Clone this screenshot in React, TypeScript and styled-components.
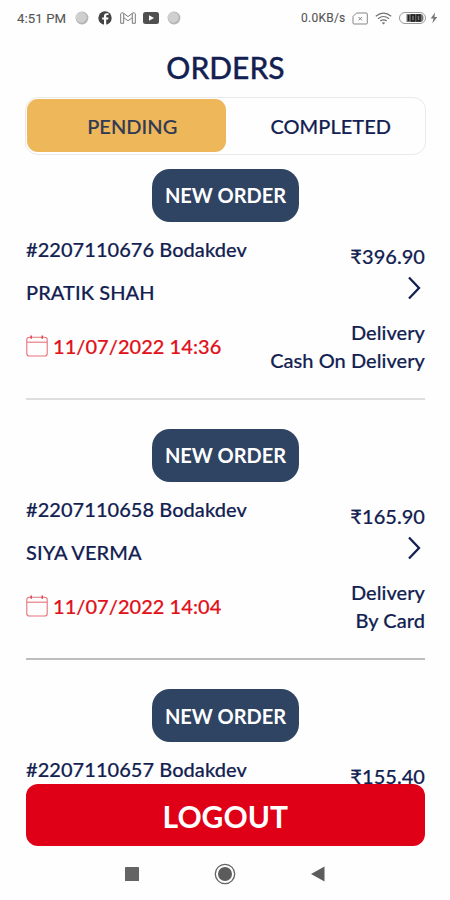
import React from "react";
import styled, { createGlobalStyle } from "styled-components";

const GlobalStyle = createGlobalStyle`
  *, *::before, *::after { box-sizing: border-box; }
  body { margin: 0; background: #fefefe; }
`;

const navy = "#141f52";

const Screen = styled.div`
  width: 450px;
  height: 900px;
  overflow: hidden;
  display: flex;
  flex-direction: column;
  background: #fefefe;
  color: ${navy};
  font-family: Lato, "Noto Sans", sans-serif;
  font-weight: 500;
  white-space: nowrap;
  -webkit-text-stroke: 0.18px currentColor;
`;

const StatusBar = styled.div`
  flex: none;
  height: 36px;
  padding: 0 12px 0 17px;
  display: flex;
  align-items: center;
  justify-content: space-between;
  font-family: Roboto, sans-serif;
  font-weight: 400;
  color: #555;
  -webkit-text-stroke-width: 0.1px;
`;

const StatusGroup = styled.div`
  display: flex;
  align-items: center;
`;

const Clock = styled.span`
  width: 58px;
  font-size: 13.2px;
  letter-spacing: 0.1px;
`;

const Speed = styled.span`
  width: 51px;
  font-size: 12px;
  letter-spacing: 0.25px;
`;

const Title = styled.h1`
  flex: none;
  margin: 0;
  height: 61px;
  padding-left: 1px;
  line-height: 62px;
  text-align: center;
  font-size: 30px;
  font-weight: 500;
  -webkit-text-stroke-width: 0.3px;
`;

const Tabs = styled.div`
  flex: none;
  margin: 0 24px 0 25px;
  height: 58px;
  padding: 1px 1px 2px;
  display: grid;
  grid-template-columns: 198.5px 1fr;
  border: 1px solid #e9e9e9;
  border-radius: 13px;
`;

const Tab = styled.div<{ $active?: boolean }>`
  display: flex;
  align-items: center;
  justify-content: center;
  padding-left: 12px;
  border-radius: 11px;
  font-size: 20px;
  letter-spacing: 0.05px;
  background: ${(p) => (p.$active ? "#edb75a" : "transparent")};
  color: ${(p) => (p.$active ? "#303a55" : navy)};
`;

const OrderList = styled.div`
  flex: none;
  height: 629px;
  padding: 14px 25px 0 26px;
  overflow: hidden;
`;

const Order = styled.section`
  height: 260.2px;
  display: flex;
  flex-direction: column;
`;

const NewOrder = styled.div`
  flex: none;
  align-self: center;
  width: 147px;
  height: 52.5px;
  display: flex;
  align-items: center;
  justify-content: center;
  border-radius: 18px;
  background: #2f4363;
  color: #fff;
  font-size: 20px;
  font-weight: 700;
  -webkit-text-stroke-width: 0;
`;

const Details = styled.div<{ $shade: string }>`
  flex: none;
  height: 178px;
  display: flex;
  justify-content: space-between;
  border-bottom: 2px solid ${(p) => p.$shade};
  font-size: 20px;
  letter-spacing: 0.05px;
  line-height: 28px;
`;

const Column = styled.div<{ $end?: boolean }>`
  display: flex;
  flex-direction: column;
  align-items: ${(p) => (p.$end ? "flex-end" : "flex-start")};
  padding-top: ${(p) => (p.$end ? 20 : 13)}px;
`;

const Customer = styled.div`
  margin-top: 15px;
`;

const DateRow = styled.div`
  margin-top: 26px;
  display: flex;
  align-items: center;
  gap: 5px;
  color: #e1111a;
`;

const ChevronSlot = styled.div`
  height: 32px;
  margin: 2px 4.5px 14px 0;
  display: flex;
  align-items: center;
`;

const Logout = styled.button`
  flex: none;
  margin: 0 25px 0 25.5px;
  height: 62px;
  border: 0;
  border-radius: 12px;
  background: #df0018;
  color: #fff;
  font: 700 30px/62px Lato, sans-serif;
  padding: 1px 0 1px;
  -webkit-text-stroke-width: 0;
`;

const NavBar = styled.div`
  flex: none;
  height: 55px;
  display: flex;
  justify-content: center;
  align-items: center;
  gap: 75px;
`;

const Spacer = styled.span<{ $w: number }>`
  width: ${(p) => p.$w}px;
`;

const Dot = () => (
  <svg width="14" height="14" viewBox="0 0 14 14">
    <circle cx="7" cy="7" r="6.4" fill="#b4b4b4" />
    <circle cx="6.3" cy="6.3" r="5.4" fill="#cfcfcf" />
  </svg>
);

const FacebookIcon = () => (
  <svg width="14" height="14" viewBox="0 0 14 14">
    <circle cx="7" cy="7" r="6.7" fill="#444" />
    <path d="M8.200 14V8.600h2l.3-2H8.200V5.300c0-.7.3-1.200 1.200-1.200h1.200V2.400C8.300 1.900 6 2.200 6 5v1.600H4.200v2H6V14z" fill="#fff" />
  </svg>
);

const GmailIcon = () => (
  <svg width="16" height="12" viewBox="0 0 16 12" fill="none" stroke="#7a7a7a" strokeWidth="1">
    <path d="M.7 1.700Q1.500.3 3.200 1L8 4.600 12.800 1Q14.500.3 15.300 1.700V11.300h-3V5.500L8 8.800 3.700 5.500v5.800h-3zM3.700 1.500v4M12.300 1.500v4" />
  </svg>
);

const VideoIcon = () => (
  <svg width="16" height="12" viewBox="0 0 16 12">
    <rect width="16" height="12" rx="2.500" fill="#505050" />
    <path d="M6 3.200v5.600L11 6z" fill="#fff" />
  </svg>
);

const SimIcon = () => (
  <svg width="16" height="13" viewBox="0 0 16 13" fill="none" stroke="#858585">
    <path d="M4.500 1H14.300Q15.300 1 15.300 2V11Q15.300 12 14.300 12H2Q1 12 1 11V4.500z" />
    <path d="M6.500 5l3.400 3.400M9.900 5L6.500 8.400" />
  </svg>
);

const WifiIcon = () => (
  <svg width="17" height="13" viewBox="0 0 17 13" fill="none" stroke="#707070" strokeWidth="1.200">
    <path d="M.8 4.300Q8.500-2.200 16.200 4.300M3 6.700Q8.500 2.300 14 6.700M5.300 9.100Q8.500 6.700 11.700 9.100" />
    <path d="M6.800 10.700Q8.500 9.700 10.200 10.700L8.500 12.600z" fill="#707070" stroke="none" />
  </svg>
);

const BatteryIcon = () => (
  <svg width="27" height="12" viewBox="0 0 27 12">
    <rect x=".5" y=".5" width="26" height="11" rx="5.500" fill="#fff" stroke="#999" />
    <path d="M7.500 2h14Q24.500 2 24.500 6t-3 4h-14z" fill="#777" />
    <path d="M9.500 3v6M12.500 3h3v6h-3zM18 3h3v6h-3z" fill="none" stroke="#222" strokeWidth="1.500" />
  </svg>
);

const BoltIcon = () => (
  <svg width="8" height="12" viewBox="0 0 8 12">
    <path d="M5 .5L.7 6.600h2.800L2.300 11.500 7.300 5H4.500z" fill="#777" />
  </svg>
);

const CalendarIcon = () => (
  <svg width="22" height="22" viewBox="0 0 22 22" fill="none" stroke="#e6737b" strokeWidth="1.100">
    <rect x=".8" y="2.200" width="20.400" height="18.800" rx="2.600" />
    <path d="M1 7.200h20" />
    <path d="M5.200.5v3.200M16.300.5v3.200" stroke="#d9444f" strokeWidth="1.500" />
  </svg>
);

const Chevron = () => (
  <svg width="14" height="24" viewBox="0 0 14 24" fill="none" stroke={navy} strokeWidth="2.300">
    <path d="M2 1.500L12 12 2 22.500" />
  </svg>
);

const orders = [
  { id: "#2207110676 Bodakdev", name: "PRATIK SHAH", date: "11/07/2022 14:36", price: "₹396.90", pay: "Cash On Delivery", shade: "#dedede" },
  { id: "#2207110658 Bodakdev", name: "SIYA VERMA", date: "11/07/2022 14:04", price: "₹165.90", pay: "By Card", shade: "#bdbdbd" },
  { id: "#2207110657 Bodakdev", name: "", date: "", price: "₹155.40", pay: "", shade: "#dedede" },
];

export default function App() {
  return (
    <Screen>
      <GlobalStyle />
      <StatusBar>
        <StatusGroup>
          <Clock>4:51 PM</Clock>
          <Dot />
          <Spacer $w={9} />
          <FacebookIcon />
          <Spacer $w={8} />
          <GmailIcon />
          <Spacer $w={7} />
          <VideoIcon />
          <Spacer $w={8} />
          <Dot />
        </StatusGroup>
        <StatusGroup>
          <Speed>0.0KB/s</Speed>
          <SimIcon />
          <Spacer $w={7} />
          <WifiIcon />
          <Spacer $w={7} />
          <BatteryIcon />
          <Spacer $w={4} />
          <BoltIcon />
        </StatusGroup>
      </StatusBar>
      <Title>ORDERS</Title>
      <Tabs>
        <Tab $active>PENDING</Tab>
        <Tab>COMPLETED</Tab>
      </Tabs>
      <OrderList>
        {orders.map((o) => (
          <Order key={o.id}>
            <NewOrder>NEW ORDER</NewOrder>
            <Details $shade={o.shade}>
              <Column>
                <div>{o.id}</div>
                {o.name && <Customer>{o.name}</Customer>}
                {o.date && (
                  <DateRow>
                    <CalendarIcon />
                    {o.date}
                  </DateRow>
                )}
              </Column>
              <Column $end>
                <div>{o.price}</div>
                {o.pay && (
                  <>
                    <ChevronSlot>
                      <Chevron />
                    </ChevronSlot>
                    <div>Delivery</div>
                    <div>{o.pay}</div>
                  </>
                )}
              </Column>
            </Details>
          </Order>
        ))}
      </OrderList>
      <Logout>LOGOUT</Logout>
      <NavBar>
        <svg width="14" height="14" viewBox="0 0 14 14">
          <rect width="14" height="14" rx=".5" fill="#646464" />
        </svg>
        <svg width="22" height="22" viewBox="0 0 22 22">
          <circle cx="11" cy="11" r="9.700" fill="none" stroke="#646464" strokeWidth="1.300" />
          <circle cx="11" cy="11" r="7" fill="#5c5c5c" />
        </svg>
        <svg width="14" height="16" viewBox="0 0 14 16">
          <path d="M0 8L13.500.5v15z" fill="#5c5c5c" />
        </svg>
      </NavBar>
    </Screen>
  );
}
